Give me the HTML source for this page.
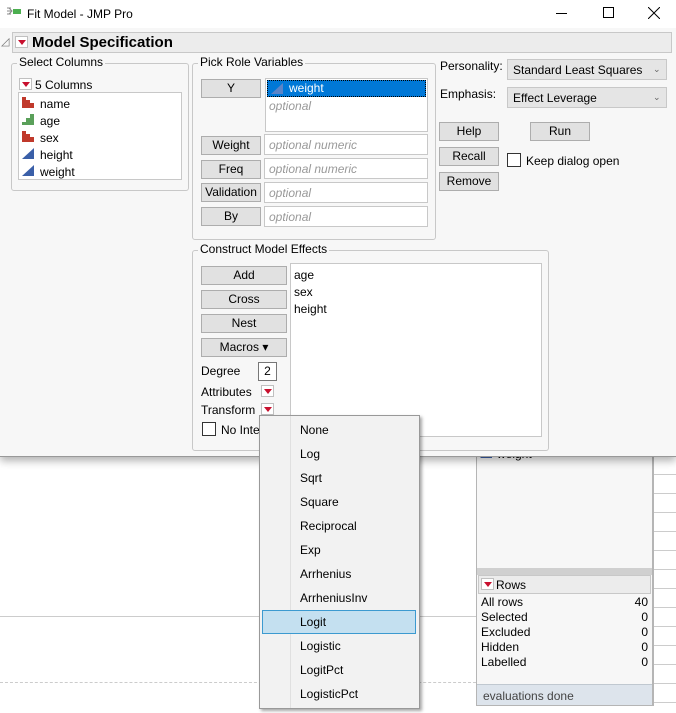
<!DOCTYPE html>
<html><head><meta charset="utf-8"><style>
*{margin:0;padding:0;box-sizing:border-box}
body{width:676px;height:713px;overflow:hidden;background:#fff;font-family:"Liberation Sans",sans-serif;font-size:12px;color:#000;position:relative}
.a{position:absolute}
.t{position:absolute;white-space:nowrap;line-height:14px}
.btn{position:absolute;background:#e1e1e1;border:1px solid #adadad;text-align:center;line-height:16px;font-size:12px}
.fld{position:absolute;background:#fff;border:1px solid #c8c8c8}
.ph{color:#999;font-style:italic;position:absolute;left:4px;top:3px;line-height:14px}
.grp{position:absolute;border:1px solid #c8c8c8;border-radius:3px}
.gl{position:absolute;background:#f7f7f7;padding:0 2px;line-height:13px;top:-8px;left:5px}
.dd{position:absolute;width:13px;height:12px;background:#fff;border:1px solid #c0c0c0}
.dd:after{content:"";position:absolute;left:2px;top:3px;border-left:4px solid transparent;border-right:4px solid transparent;border-top:5px solid #c8102e}
.cb{position:absolute;width:14px;height:14px;background:#fff;border:1px solid #555}
.mi{position:absolute;left:40px;line-height:14px}
</style></head><body>
<!-- background bottom -->
<div class="a" style="left:0;top:616px;width:476px;height:1px;background:#ccc"></div>
<div class="a" style="left:0;top:682px;width:476px;border-top:1px dashed #ccc"></div>
<div class="a" style="left:476px;top:440px;width:178px;height:266px;background:#f7f7f7;border-left:1px solid #b5b5b5;border-right:2px solid #b5b5b5;border-bottom:1px solid #b5b5b5"></div>
<svg class="a" style="left:480px;top:447px" width="13" height="12"><path d="M0 11L12 0V11Z" fill="#3a5fa8"/></svg>
<div class="t" style="left:497px;top:447px">weight</div>
<div class="a" style="left:477px;top:568px;width:175px;height:7px;background:#d0d0d0"></div>
<div class="a" style="left:478px;top:575px;width:173px;height:19px;background:#ececec;border:1px solid #c8c8c8"></div>
<div class="dd" style="left:481px;top:578px"></div>
<div class="t" style="left:496px;top:578px">Rows</div>
<div class="t" style="left:481px;top:595px;line-height:15px">All rows<br>Selected<br>Excluded<br>Hidden<br>Labelled</div>
<div class="t" style="left:630px;top:595px;line-height:15px;text-align:right;width:18px">40<br>0<br>0<br>0<br>0</div>
<div class="a" style="left:477px;top:684px;width:175px;height:21px;background:#dde4ec;border-top:1px solid #c0c8d0"></div>
<div class="t" style="left:483px;top:689px;color:#444">evaluations done</div>
<div class="a" style="left:654px;top:456px;width:22px;height:257px;background:#fff;background-image:repeating-linear-gradient(to bottom,transparent 0,transparent 18px,#ccc 18px,#ccc 19px)"></div>
<!-- window -->
<div class="a" style="left:0;top:0;width:676px;height:457px;background:#f7f7f7;border-bottom:1px solid #999;box-shadow:0 4px 8px rgba(0,0,0,.3)"></div>
<div class="a" style="left:0;top:0;width:676px;height:28px;background:#fff"></div>
<svg class="a" style="left:6px;top:6px" width="16" height="12"><path d="M1 2h4M1 5h5M1 8h4M3 2l3 3-3 3" stroke="#888" fill="none"/><rect x="7" y="3" width="8" height="5" fill="#4caf50"/></svg>
<div class="t" style="left:27px;top:7px">Fit Model - JMP Pro</div>
<div class="a" style="left:556px;top:13px;width:11px;height:1px;background:#000"></div>
<div class="a" style="left:603px;top:7px;width:11px;height:11px;border:1px solid #000"></div>
<svg class="a" style="left:648px;top:7px" width="12" height="12"><path d="M0 0L12 12M12 0L0 12" stroke="#000"/></svg>
<div class="t" style="left:1px;top:35px;color:#777;font-size:11px">◿</div>
<div class="a" style="left:12px;top:32px;width:660px;height:21px;background:#ececec;border:1px solid #c8c8c8"></div>
<div class="dd" style="left:15px;top:36px"></div>
<div class="t" style="left:32px;top:34px;font-size:15px;font-weight:bold;line-height:17px">Model Specification</div>
<!-- Select columns -->
<div class="grp" style="left:11px;top:63px;width:178px;height:128px"><div class="gl">Select Columns</div></div>
<div class="dd" style="left:19px;top:78px"></div>
<div class="t" style="left:35px;top:78px">5 Columns</div>
<div class="fld" style="left:18px;top:92px;width:164px;height:88px"></div>
<svg class="a" style="left:22px;top:96px" width="14" height="82">
<g fill="#c0392b"><rect x="0" y="1" width="4" height="11"/><rect x="4" y="4" width="4" height="8"/><rect x="8" y="7" width="4" height="5"/></g>
<g fill="#5aa05a"><rect x="0" y="26" width="4" height="3"/><rect x="4" y="22" width="4" height="7"/><rect x="8" y="18" width="4" height="11"/></g>
<g fill="#c0392b"><rect x="0" y="35" width="4" height="11"/><rect x="4" y="38" width="4" height="8"/><rect x="8" y="41" width="4" height="5"/></g>
<path d="M0 63L12 52V63Z" fill="#3a5fa8"/><path d="M0 80L12 69V80Z" fill="#3a5fa8"/></svg>
<div class="t" style="left:40px;top:96px;line-height:17px">name<br>age<br>sex<br>height<br>weight</div>
<!-- Pick role -->
<div class="grp" style="left:192px;top:63px;width:244px;height:177px"><div class="gl">Pick Role Variables</div></div>
<div class="btn" style="left:201px;top:79px;width:60px;height:19px">Y</div>
<div class="fld" style="left:265px;top:78px;width:163px;height:54px"></div>
<div class="a" style="left:267px;top:80px;width:159px;height:17px;background:#0078d7;border:1px dotted #000"></div>
<svg class="a" style="left:271px;top:83px" width="13" height="12"><path d="M0 11L12 0V11Z" fill="#5b84c8"/></svg>
<div class="t" style="left:289px;top:81px;color:#fff">weight</div>
<div class="t" style="left:269px;top:99px;color:#999;font-style:italic">optional</div>
<div class="btn" style="left:201px;top:136px;width:60px;height:19px">Weight</div>
<div class="fld" style="left:264px;top:134px;width:164px;height:21px"><span class="ph">optional numeric</span></div>
<div class="btn" style="left:201px;top:160px;width:60px;height:19px">Freq</div>
<div class="fld" style="left:264px;top:158px;width:164px;height:21px"><span class="ph">optional numeric</span></div>
<div class="btn" style="left:201px;top:183px;width:60px;height:19px">Validation</div>
<div class="fld" style="left:264px;top:182px;width:164px;height:21px"><span class="ph">optional</span></div>
<div class="btn" style="left:201px;top:207px;width:60px;height:19px">By</div>
<div class="fld" style="left:264px;top:206px;width:164px;height:21px"><span class="ph">optional</span></div>
<!-- right -->
<div class="t" style="left:440px;top:59px">Personality:</div>
<div class="a" style="left:507px;top:59px;width:160px;height:21px;background:#e5e5e5;border:1px solid #c8c8c8"></div>
<div class="t" style="left:513px;top:63px">Standard Least Squares</div>
<div class="t" style="left:653px;top:62px;font-size:9px;color:#666">⌄</div>
<div class="t" style="left:440px;top:87px">Emphasis:</div>
<div class="a" style="left:507px;top:87px;width:160px;height:21px;background:#e5e5e5;border:1px solid #c8c8c8"></div>
<div class="t" style="left:513px;top:91px">Effect Leverage</div>
<div class="t" style="left:653px;top:90px;font-size:9px;color:#666">⌄</div>
<div class="btn" style="left:439px;top:122px;width:60px;height:19px">Help</div>
<div class="btn" style="left:530px;top:122px;width:60px;height:19px">Run</div>
<div class="btn" style="left:439px;top:147px;width:60px;height:19px">Recall</div>
<div class="btn" style="left:439px;top:172px;width:60px;height:19px">Remove</div>
<div class="cb" style="left:507px;top:153px;border-color:#333"></div>
<div class="t" style="left:526px;top:154px">Keep dialog open</div>
<!-- construct -->
<div class="grp" style="left:192px;top:250px;width:357px;height:201px"><div class="gl">Construct Model Effects</div></div>
<div class="btn" style="left:201px;top:266px;width:86px;height:19px">Add</div>
<div class="btn" style="left:201px;top:290px;width:86px;height:19px">Cross</div>
<div class="btn" style="left:201px;top:314px;width:86px;height:19px">Nest</div>
<div class="btn" style="left:201px;top:338px;width:86px;height:19px">Macros &#9662;</div>
<div class="fld" style="left:290px;top:263px;width:252px;height:174px"></div>
<div class="t" style="left:294px;top:267px;line-height:17px">age<br>sex<br>height</div>
<div class="t" style="left:201px;top:364px">Degree</div>
<div class="a" style="left:258px;top:362px;width:19px;height:19px;background:#fff;border:1px solid #777;text-align:center;line-height:17px">2</div>
<div class="t" style="left:201px;top:385px">Attributes</div>
<div class="dd" style="left:261px;top:385px"></div>
<div class="t" style="left:201px;top:403px">Transform</div>
<div class="dd" style="left:261px;top:403px"></div>
<div class="cb" style="left:202px;top:422px;border-color:#333"></div>
<div class="t" style="left:221px;top:423px">No Inte</div>
<!-- menu -->
<div class="a" style="left:259px;top:415px;width:161px;height:294px;background:#f2f2f2;border:1px solid #999;box-shadow:2px 2px 3px rgba(0,0,0,.35)">
<div class="a" style="left:30px;top:0;width:1px;height:292px;background:#e0e0e0"></div>
<div class="a" style="left:2px;top:194px;width:154px;height:24px;background:#c4e0f0;border:1px solid #3c9ad0"></div>
<div class="mi" style="top:7px">None</div><div class="mi" style="top:31px">Log</div><div class="mi" style="top:55px">Sqrt</div><div class="mi" style="top:79px">Square</div><div class="mi" style="top:103px">Reciprocal</div><div class="mi" style="top:127px">Exp</div><div class="mi" style="top:151px">Arrhenius</div><div class="mi" style="top:175px">ArrheniusInv</div><div class="mi" style="top:199px">Logit</div><div class="mi" style="top:223px">Logistic</div><div class="mi" style="top:247px">LogitPct</div><div class="mi" style="top:271px">LogisticPct</div>
</div>
</body></html>
